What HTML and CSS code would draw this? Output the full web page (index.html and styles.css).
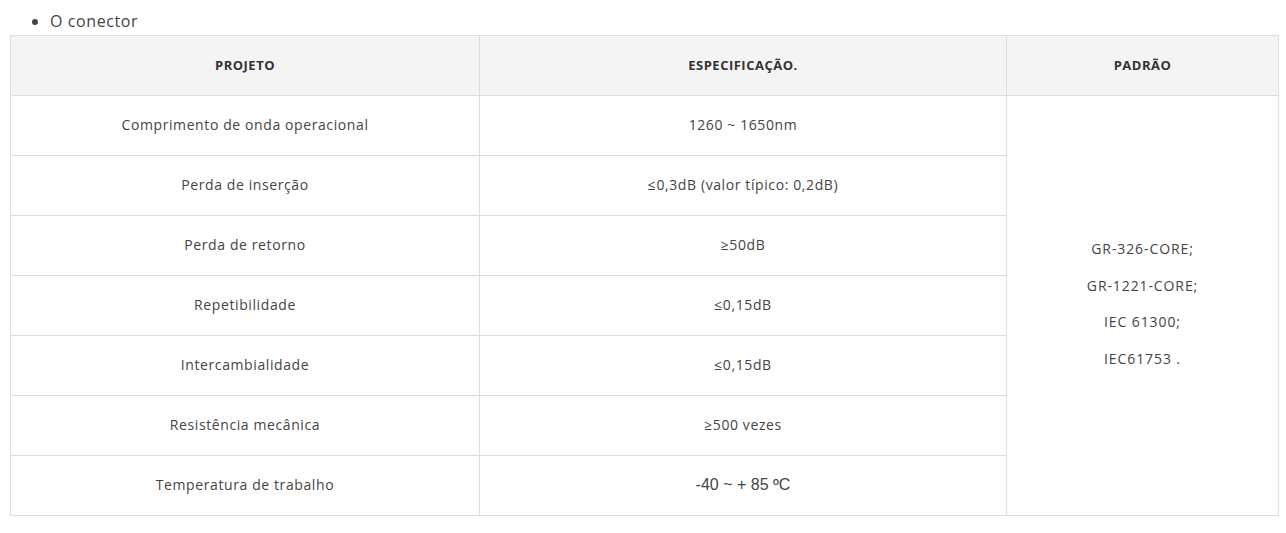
FILE: index.html
```html
<!DOCTYPE html>
<html lang="pt">
<head>
<meta charset="utf-8">
<link rel="stylesheet" href="styles.css">
</head>
<body>
<div class="wrap">
  <ul class="list">
    <li>O conector</li>
  </ul>
  <table class="spec">
    <colgroup>
      <col class="c1"><col class="c2"><col class="c3">
    </colgroup>
    <thead>
      <tr><th>PROJETO</th><th>ESPECIFICAÇÃO.</th><th>PADRÃO</th></tr>
    </thead>
    <tbody>
      <tr><td>Comprimento de onda operacional</td><td>1260 ~ 1650nm</td>
        <td rowspan="7" class="std">
          <div>GR-326-CORE;</div>
          <div>GR-1221-CORE;</div>
          <div>IEC 61300;</div>
          <div>IEC61753 .</div>
        </td></tr>
      <tr><td>Perda de inserção</td><td>≤0,3dB (valor típico: 0,2dB)</td></tr>
      <tr><td>Perda de retorno</td><td>≥50dB</td></tr>
      <tr><td>Repetibilidade</td><td>≤0,15dB</td></tr>
      <tr><td>Intercambialidade</td><td>≤0,15dB</td></tr>
      <tr><td>Resistência mecânica</td><td>≥500 vezes</td></tr>
      <tr><td>Temperatura de trabalho</td><td><span class="arial">-40 ~ + 85 ºC</span></td></tr>
    </tbody>
  </table>
</div>
</body>
</html>
```
FILE: styles.css
```css
html, body {
  margin: 0;
  padding: 0;
  background: #fff;
}
body {
  font-family: "Open Sans", "Liberation Sans", sans-serif;
  color: #444;
}
.wrap {
  padding: 8px 9px 0 10px;
}
.list {
  margin: 0;
  padding-left: 40px;
  font-size: 16px;
  line-height: 27px;
  letter-spacing: 0.6px;
  color: #444;
}
.spec {
  border-collapse: collapse;
  width: 1268px;
  table-layout: fixed;
  font-size: 14px;
  letter-spacing: 0.6px;
  color: #444;
}
.c1 { width: 469px; }
.c2 { width: 527px; }
.c3 { width: 272px; }
.spec th, .spec td {
  border: 1px solid #ddd;
  text-align: center;
  vertical-align: middle;
  height: 57px;
  padding: 0 0 2px;
}
.spec th {
  background: #f4f4f4;
  font-size: 13px;
  font-weight: 700;
  letter-spacing: 0.5px;
  color: #333;
  height: 58px;
  padding: 0 0 1px;
}
.spec td.std {
  padding-bottom: 3px;
}
.spec td.std div {
  line-height: 36.5px;
  letter-spacing: 0.9px;
}
.arial {
  font-family: "Liberation Sans", Arial, sans-serif;
  font-size: 16px;
  letter-spacing: 0;
}
```
